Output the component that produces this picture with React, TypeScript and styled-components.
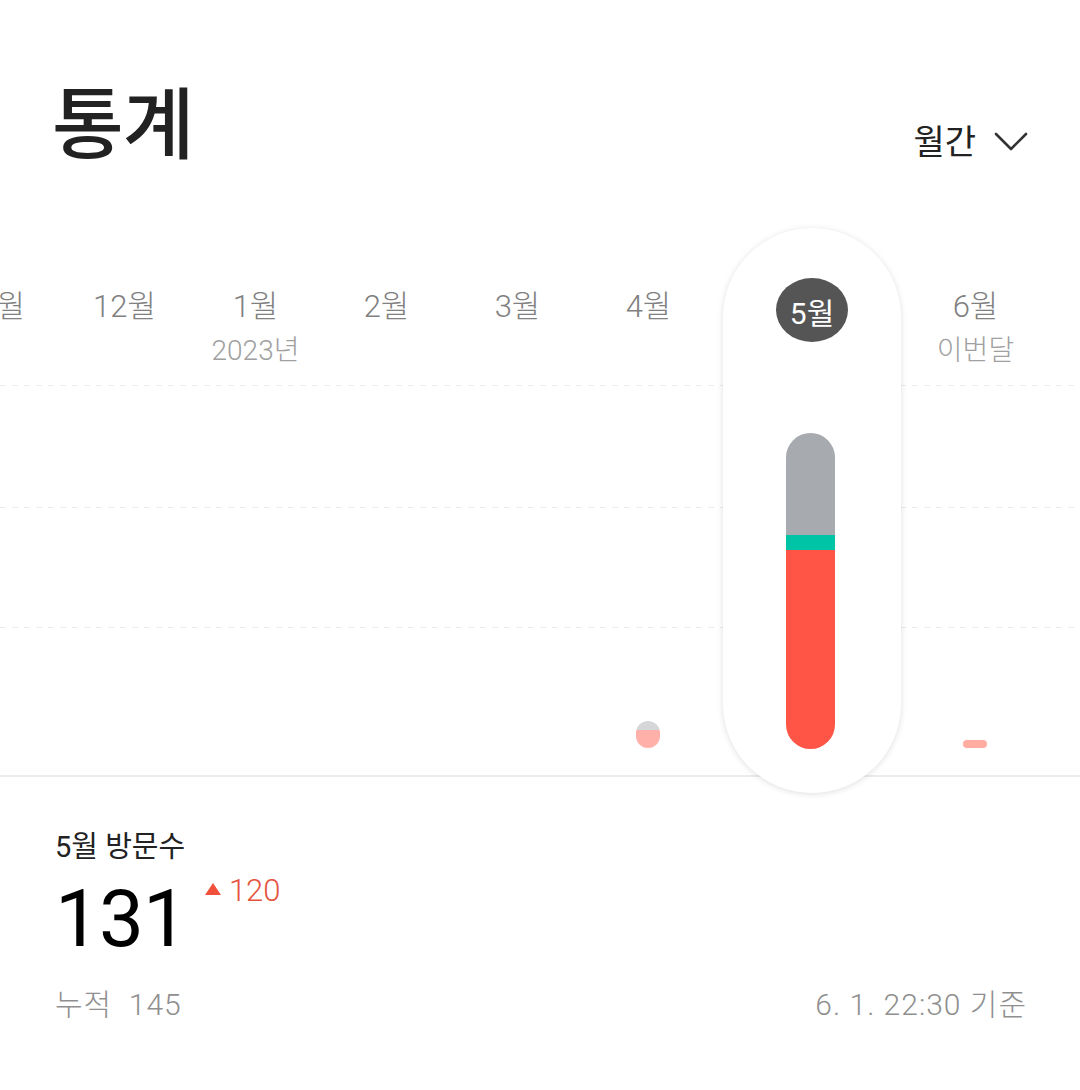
import React from "react";
import styled, { createGlobalStyle } from "styled-components";

const Global = createGlobalStyle`
  html, body { margin: 0; padding: 0; background: #ffffff; }
  body { font-family: Roboto, "Noto Sans CJK KR", sans-serif; -webkit-font-smoothing: antialiased; }
  * { box-sizing: border-box; }
`;

const Page = styled.div`
  width: 1080px;
  height: 1090px;
  overflow: hidden;
  background: #fff;
  display: flex;
  flex-direction: column;
`;

const Header = styled.header`
  display: flex;
  align-items: flex-start;
  justify-content: space-between;
  padding: 77px 52px 0 52px;
  height: 228px;
`;

const Title = styled.h1`
  margin: 0;
  font-size: 78px;
  line-height: 100px;
  font-weight: 500;
  color: #222;
  letter-spacing: -1px;
`;

const PeriodButton = styled.button`
  display: flex;
  align-items: center;
  gap: 18px;
  border: 0;
  background: none;
  padding: 0;
  margin-top: 45px;
  font-family: inherit;
  font-size: 34px;
  line-height: 40px;
  color: #222;
  cursor: pointer;
`;

const ChartRow = styled.div`
  display: flex;
  height: 549px;
  margin-left: -72px;
  border-bottom: 2px solid #ececec;
  background-image:
    repeating-linear-gradient(90deg, #ececec 0 6px, transparent 6px 12px),
    repeating-linear-gradient(90deg, #ececec 0 6px, transparent 6px 12px),
    repeating-linear-gradient(90deg, #ececec 0 6px, transparent 6px 12px);
  background-size: 100% 1px;
  background-repeat: no-repeat;
  background-position: 0 157px, 0 279px, 0 399px;
`;

const Column = styled.div<{ $wide?: boolean }>`
  flex: 0 0 ${(p) => (p.$wide ? "196px" : "131px")};
  display: flex;
  flex-direction: column;
  align-items: center;
  padding: ${(p) => (p.$wide ? "0 9px" : "61px 0 27px")};
`;

const Highlight = styled.div`
  width: 100%;
  height: 565px;
  flex-shrink: 0;
  background: #fff;
  border-radius: 90px;
  box-shadow: 0 1px 6px rgba(0, 0, 0, 0.13);
  display: flex;
  flex-direction: column;
  align-items: center;
  padding: 50px 0 44px;
  position: relative;
  z-index: 1;
`;

const MonthLabel = styled.div`
  font-size: 31px;
  line-height: 36px;
  font-weight: 300;
  color: #808080;
  white-space: nowrap;
`;

const SubLabel = styled.div`
  font-size: 28px;
  line-height: 32px;
  font-weight: 300;
  margin-top: 10px;
  color: #a0a0a0;
  white-space: nowrap;
`;

const Badge = styled.div`
  width: 72px;
  height: 64px;
  border-radius: 50%;
  background: #555;
  color: #fff;
  font-size: 30px;
  display: flex;
  align-items: center;
  justify-content: center;
  padding-top: 1px;
`;

const Spacer = styled.div`
  flex: 1;
`;

const Bar = styled.div`
  width: 49px;
  height: 316px;
  margin-right: 4px;
  border-radius: 25px;
  overflow: hidden;
  display: flex;
  flex-direction: column;
`;

const Segment = styled.div<{ $color: string; $h: number }>`
  flex: 0 0 ${(p) => p.$h}px;
  background: ${(p) => p.$color};
`;

const Dot = styled.div`
  width: 24px;
  height: 27px;
  margin-right: 2px;
  border-radius: 12px;
  overflow: hidden;
  display: flex;
  flex-direction: column;
`;

const Dash = styled.div`
  width: 24px;
  height: 8px;
  margin-right: 2px;
  border-radius: 4px;
  background: #ffaca3;
`;

const Summary = styled.section`
  padding: 52px 53px 0 55px;
  display: flex;
  flex-direction: column;
`;

const SummaryLabel = styled.div`
  font-size: 29px;
  line-height: 36px;
  color: #222;
`;

const ValueRow = styled.div`
  display: flex;
  align-items: flex-start;
  gap: 18px;
  margin-top: 12px;
`;

const BigValue = styled.div`
  font-size: 80px;
  line-height: 84px;
  color: #000;
  letter-spacing: -1px;
`;

const Delta = styled.div`
  display: flex;
  align-items: center;
  gap: 8px;
  color: #e5533d;
  font-size: 31px;
  font-weight: 300;
  line-height: 36px;
  margin-top: -4px;
`;

const Triangle = styled.span`
  width: 0;
  height: 0;
  border-left: 8px solid transparent;
  border-right: 8px solid transparent;
  border-bottom: 12px solid #f0503c;
  margin-top: -4px;
`;

const FooterRow = styled.div`
  display: flex;
  justify-content: space-between;
  margin-top: 26px;
  font-size: 30px;
  font-weight: 300;
  line-height: 36px;
  letter-spacing: 1px;
  color: #8f8f8f;
`;

const Chevron = () => (
  <svg width="34" height="20" viewBox="0 0 34 20" fill="none">
    <path d="M2 2 L17 17 L32 2" stroke="#333" strokeWidth="2.6" strokeLinecap="round" strokeLinejoin="round" />
  </svg>
);

type M = { label: string; sub?: string; kind?: "dot" | "dash" };
const months: M[] = [
  { label: "11월" },
  { label: "12월" },
  { label: "1월", sub: "2023년" },
  { label: "2월" },
  { label: "3월" },
  { label: "4월", kind: "dot" },
];

export default function App() {
  return (
    <Page>
      <Global />
      <Header>
        <Title>통계</Title>
        <PeriodButton>
          월간
          <Chevron />
        </PeriodButton>
      </Header>
      <ChartRow>
        {months.map((m) => (
          <Column key={m.label}>
            <MonthLabel>{m.label}</MonthLabel>
            {m.sub && <SubLabel>{m.sub}</SubLabel>}
            <Spacer />
            {m.kind === "dot" && (
              <Dot>
                <Segment $color="#d5d6d8" $h={9} />
                <Segment $color="#ffb0a8" $h={18} />
              </Dot>
            )}
          </Column>
        ))}
        <Column $wide>
          <Highlight>
            <Badge>5월</Badge>
            <Spacer />
            <Bar>
              <Segment $color="#a7aaae" $h={102} />
              <Segment $color="#00c4a6" $h={15} />
              <Segment $color="#ff5546" $h={199} />
            </Bar>
          </Highlight>
        </Column>
        <Column>
          <MonthLabel>6월</MonthLabel>
          <SubLabel>이번달</SubLabel>
          <Spacer />
          <Dash />
        </Column>
      </ChartRow>
      <Summary>
        <SummaryLabel>5월 방문수</SummaryLabel>
        <ValueRow>
          <BigValue>131</BigValue>
          <Delta>
            <Triangle />
            120
          </Delta>
        </ValueRow>
        <FooterRow>
          <span>누적&nbsp;&nbsp;145</span>
          <span>6. 1. 22:30 기준</span>
        </FooterRow>
      </Summary>
    </Page>
  );
}
